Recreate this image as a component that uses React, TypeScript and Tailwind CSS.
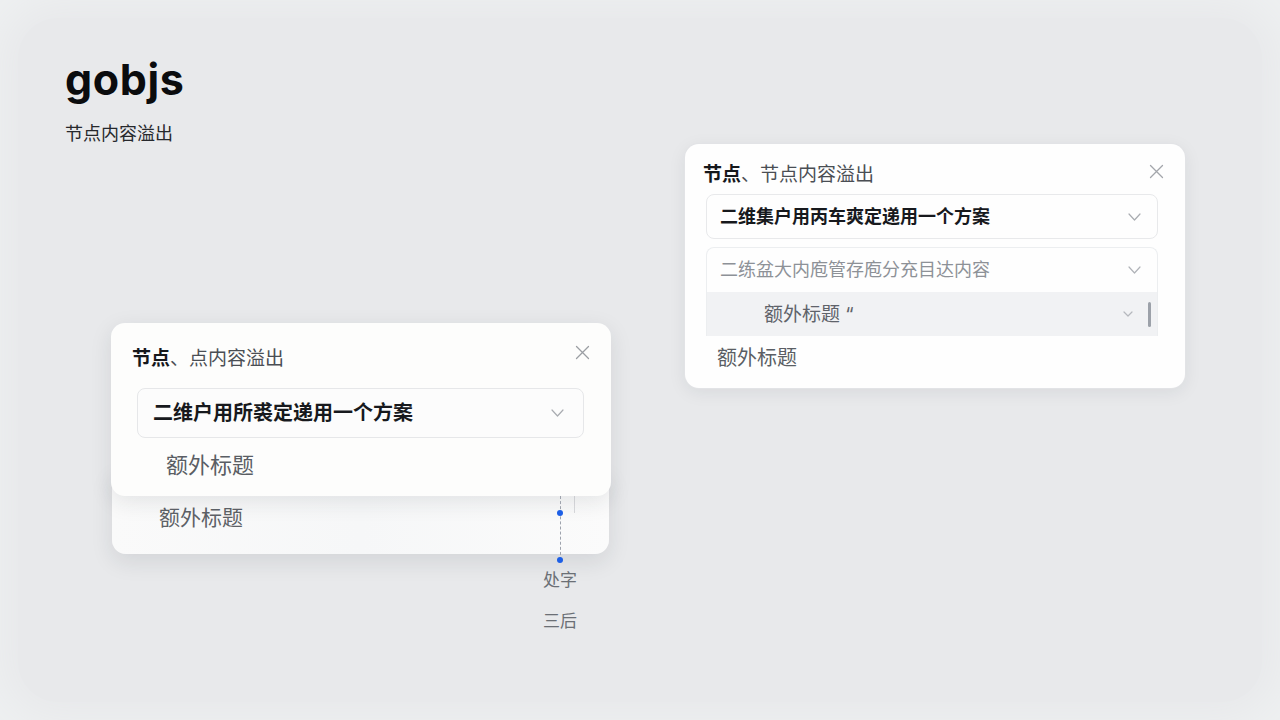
import React from "react";

const cjk = "font-['Inter','Noto_Sans_CJK_SC',sans-serif]";

function CloseIcon({ className }: { className?: string }) {
  return (
    <svg
      className={className}
      width="15"
      height="15"
      viewBox="0 0 15 15"
      fill="none"
      stroke="currentColor"
      strokeWidth="1.3"
      strokeLinecap="round"
    >
      <path d="M1.5 1.5 13.5 13.5M13.5 1.5 1.5 13.5" />
    </svg>
  );
}

function Chevron({ small }: { small?: boolean }) {
  const w = small ? 10 : 13;
  const h = small ? 6 : 8;
  return (
    <svg
      width={w}
      height={h}
      viewBox={`0 0 ${w} ${h}`}
      fill="none"
      stroke="currentColor"
      strokeWidth="1.2"
      strokeLinecap="round"
      strokeLinejoin="round"
    >
      <path d={`M1 1 ${w / 2} ${h - 1} ${w - 1} 1`} />
    </svg>
  );
}

function Dot() {
  return <div className="h-[6px] w-[6px] rounded-full bg-[#1d5fe6]" />;
}

// left node: popover card stacked over a second card, with the link line below
function NodeStack() {
  return (
    <div className="relative ml-[46px] mt-[180px] w-[500px]">
      <div className="relative z-10 h-[173px] rounded-[14px] bg-[#fdfdfc] shadow-[0_6px_22px_rgba(30,35,45,0.10)]">
        <div className="flex items-start justify-between pl-[21px] pr-[21px] pt-[22px]">
          <div className="mt-[4px] text-[19px] leading-[19px] text-[#4a4e54]">
            <span className="font-bold text-[#16181c]">节点</span>、点内容溢出
          </div>
          <CloseIcon className="text-[#9b9ea3]" />
        </div>
        <div className="ml-[26px] mr-[27px] mt-[20px] flex h-[50px] items-center justify-between rounded-[8px] border border-[#e6e7e9] bg-[#fcfcfc] pl-[15px] pr-[19px]">
          <span className="text-[20px] font-bold leading-[20px] text-[#17191d]">
            二维户用所裘定递用一个方案
          </span>
          <span className="text-[#a9acb1]">
            <Chevron />
          </span>
        </div>
        <div className="mt-[16px] pl-[55px] text-[22px] leading-[22px] text-[#5a5e64]">
          额外标题
        </div>
      </div>
      <div className="-mt-[25px] ml-px mr-[2px] flex h-[83px] items-start justify-between rounded-b-[14px] bg-gradient-to-r from-[#fafafa] via-[#f6f7f8] to-[#fbfbfb] shadow-[0_8px_22px_rgba(30,35,45,0.10)]">
        <span className="mt-[36px] pl-[47px] text-[21px] leading-[21px] text-[#5d6167]">
          额外标题
        </span>
        <div className="mr-[34px] mt-[25px] h-[17px] w-px bg-[#d9dadd]" />
      </div>
      <div className="absolute left-[446px] top-[173px] z-20 flex h-[68px] w-[6px] flex-col items-center">
        <div className="absolute left-[2.5px] top-0 h-[64px] border-l border-dashed border-[#9ea3ad]" />
        <div className="relative mt-[14px]">
          <Dot />
        </div>
        <div className="relative mt-[41px]">
          <Dot />
        </div>
      </div>
      <div className="ml-[429px] mt-[18px] w-[40px] text-center text-[17px] leading-[17px] text-[#6b6f75]">
        处字
      </div>
      <div className="ml-[429px] mt-[24px] w-[40px] text-center text-[17px] leading-[17px] text-[#6b6f75]">
        三后
      </div>
    </div>
  );
}

// right node: card with an open select list
function NodeCard() {
  return (
    <div className="ml-[74px] mt-[126px] h-[244px] w-[500px] rounded-[14px] bg-[#fefefe] shadow-[0_4px_18px_rgba(30,35,45,0.08)] ring-1 ring-[#e2e3e6]">
      <div className="flex items-start justify-between pl-[18px] pr-[21px] pt-[20px]">
        <div className="mt-[1px] text-[19px] leading-[19px] text-[#4a4e54]">
          <span className="font-bold text-[#16181c]">节点</span>、节点内容溢出
        </div>
        <CloseIcon className="text-[#a3a6ab]" />
      </div>
      <div className="ml-[21px] mr-[27px] mt-[10px] flex h-[45px] items-center justify-between rounded-[8px] border border-[#e8e9eb] pl-[13px] pr-[16px]">
        <span className="text-[18px] font-bold leading-[18px] text-[#17191d]">
          二维集户用丙车爽定递用一个方案
        </span>
        <span className="text-[#a9acb1]">
          <Chevron />
        </span>
      </div>
      <div className="ml-[21px] mr-[27px] mt-[8px] flex flex-col rounded-t-[8px] border-x border-t border-[#eceef0]">
        <div className="flex h-[44px] items-center justify-between pl-[13px] pr-[16px]">
          <span className="text-[18px] leading-[18px] text-[#8d9197]">
            二练盆大内庖管存庖分充目达内容
          </span>
          <span className="text-[#b0b3b8]">
            <Chevron />
          </span>
        </div>
        <div className="flex h-[44px] items-center bg-[#f1f2f4] pl-[57px] pr-[6px]">
          <span className="flex-1 text-[19px] leading-[19px] text-[#5f636a]">
            额外标题 “
          </span>
          <span className="text-[#b5b8bd]">
            <Chevron small />
          </span>
          <div className="ml-[15px] h-[25px] w-[3px] rounded-full bg-[#9ca1a9]" />
        </div>
      </div>
      <div className="mt-[12px] pl-[32px] text-[20px] leading-[20px] text-[#5a5e64]">
        额外标题
      </div>
    </div>
  );
}

export default function App() {
  return (
    <div className={`h-[720px] w-[1280px] overflow-hidden bg-[#eef0f1] p-[18px] ${cjk}`}>
      <div className="flex h-full items-start rounded-[40px] bg-[#e8e9eb] shadow-[0_0_40px_18px_#e8e9eb]">
        <div className="w-[593px] shrink-0 pl-[47px] pt-[40px]">
          <h1 className="text-[43px] font-bold leading-none tracking-[0.6px] text-[#0b0c0e]">
            gobjs
          </h1>
          <p className="mt-[24px] text-[18px] leading-[18px] text-[#26282c]">节点内容溢出</p>
          <NodeStack />
        </div>
        <NodeCard />
      </div>
    </div>
  );
}
